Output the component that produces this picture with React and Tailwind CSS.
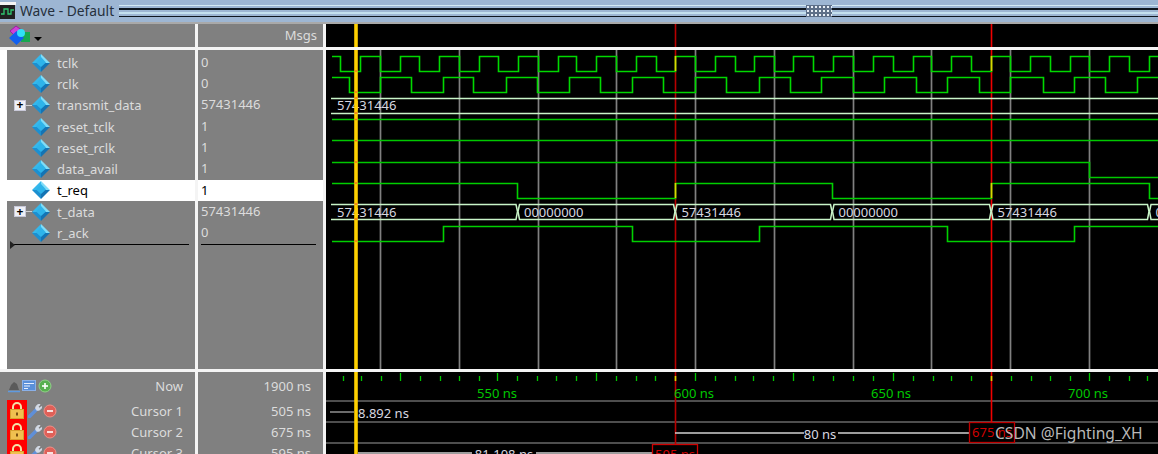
import React from "react";

const signals = [
  { name: "tclk", value: "0" },
  { name: "rclk", value: "0" },
  { name: "transmit_data", value: "57431446", bus: true },
  { name: "reset_tclk", value: "1" },
  { name: "reset_rclk", value: "1" },
  { name: "data_avail", value: "1" },
  { name: "t_req", value: "1", selected: true },
  { name: "t_data", value: "57431446", bus: true },
  { name: "r_ack", value: "0" },
];

const gridLines = [380, 459, 538, 616, 695, 774, 853, 931, 1010, 1089];

const tclkEdges = [340, 360, 380, 400, 419, 439, 459, 479, 498, 518, 538, 558, 576, 596, 616, 636, 656, 675, 695, 715, 735, 754, 774, 793, 813, 833, 853, 873, 893, 913, 931, 951, 971, 991, 1010, 1030, 1050, 1070, 1089, 1109, 1129, 1149];
const rclkEdges = [349, 380, 411, 443, 473, 506, 537, 569, 600, 632, 663, 695, 726, 759, 790, 821, 853, 884, 916, 947, 979, 1010, 1043, 1074, 1105, 1137];
const treqEdges = [517, 675, 832, 991, 1149];
const rackEdges = [443, 632, 759, 947, 1074];

const minorTicks = [343, 361, 381, 420, 440, 459, 479, 517, 537, 556, 576, 616, 636, 655, 715, 735, 753, 773, 813, 833, 853, 873, 913, 933, 951, 971, 1011, 1031, 1050, 1070, 1109, 1129, 1147];
const majorTicks = [400, 497, 596, 695, 793, 893, 1089];

// builds the square wave path from its edges
function squareWave(edges, high, low, startHigh) {
  let level = startHigh;
  let d = `M332 ${level ? high : low}`;
  edges.forEach((x) => {
    d += ` L${x + 0.5} ${level ? high : low}`;
    level = !level;
    d += ` L${x + 0.5} ${level ? high : low}`;
  });
  return `${d} L1160 ${level ? high : low}`;
}

function Diamond() {
  return (
    <svg width="18" height="18" viewBox="0 0 18 18" className="shrink-0">
      <polygon points="9,0 18,9 9,9" fill="#7fdcf8" />
      <polygon points="9,0 0,9 9,9" fill="#35b8ec" />
      <polygon points="0,9 9,18 9,9" fill="#1c8fd0" />
      <polygon points="18,9 9,18 9,9" fill="#1474b4" />
      <polygon points="9,3 14,8.5 9,13 4,8.5" fill="#2eb4ea" />
    </svg>
  );
}

function PlusBox() {
  return (
    <div className="flex items-center">
      <div className="w-[12px] h-[11px] bg-[#eef0f6] border border-[#c8c8d8] flex items-center justify-center text-black text-[12px] leading-none font-bold">
        +
      </div>
      <div className="w-[6px] h-px bg-[#d0d0d0]" />
    </div>
  );
}

function HeaderIcon() {
  return (
    <svg width="22" height="22" viewBox="0 0 22 22">
      <polygon points="7,1 14,6 7,12 1,6" fill="#d040d8" stroke="#9a20a0" strokeWidth="1" />
      <rect x="12" y="7" width="9" height="10" fill="#18a850" />
      <polygon points="7.5,6 15,13 7.5,20 0,13" fill="#1060f0" />
      <circle cx="12" cy="8" r="4" fill="#30e0f8" />
    </svg>
  );
}

function Lock() {
  return (
    <svg width="14" height="17" viewBox="0 0 14 17">
      <path d="M3 8 V5 a4 4 0 0 1 8 0 V8" fill="none" stroke="#f4e2a8" strokeWidth="2" />
      <rect x="0.5" y="7.5" width="13" height="9" fill="#f0c050" stroke="#d8a030" />
      <rect x="6" y="10.5" width="2" height="3" fill="#7a5010" />
    </svg>
  );
}

function Wrench() {
  return (
    <svg width="15" height="15" viewBox="0 0 15 15">
      <path d="M1.5 13.5 L9 6" stroke="#5f8fd8" strokeWidth="3.4" strokeLinecap="round" />
      <path d="M8 6.5 a3.6 3.6 0 0 1 4-5 l-2 2.4 1.2 1.3 2.4-1.6 a3.6 3.6 0 0 1-5 3.4z" fill="#d4dbe6" stroke="#d4dbe6" />
    </svg>
  );
}

function RoundButton({ color, ring, plus }) {
  return (
    <svg width="14" height="14" viewBox="0 0 14 14">
      <circle cx="7" cy="7" r="6" fill={color} stroke={ring} strokeWidth="1" />
      <rect x="4" y="6.2" width="6" height="1.6" fill="#fff" />
      {plus && <rect x="6.2" y="4" width="1.6" height="6" fill="#fff" />}
    </svg>
  );
}

function NowIcons() {
  return (
    <div className="flex items-center pl-[8px] gap-[2px]">
      <svg width="12" height="13" viewBox="0 0 12 13">
        <path d="M1 10 L3 5 L6 2 L9 4 L11 10z" fill="#5a5a5a" />
        <path d="M0 11.5 H12" stroke="#5f9ae0" strokeWidth="1.5" />
      </svg>
      <svg width="14" height="13" viewBox="0 0 14 13">
        <rect x="0.5" y="0.5" width="13" height="10" fill="#5a8fd8" stroke="#8ab0e8" />
        <path d="M2 3.5 H12 M2 6 H8 M2 8.5 H6" stroke="#e8f0ff" />
      </svg>
      <RoundButton color="#58b050" ring="#90d088" plus />
    </div>
  );
}

function Watermark() {
  return (
    <div className="absolute left-[995px] top-[423px] text-[15.6px] leading-5 text-[#b8b8b8] whitespace-nowrap">
      CSDN @Fighting_XH
    </div>
  );
}

function BusSegment({ x1, x2, label, open }) {
  const y = 211.5;
  const top = y - 7;
  const bottom = y + 8;
  const d = open
    ? `M${x1} ${top} H${x2 - 1.5} L${x2} ${y} L${x2 - 1.5} ${bottom} H${x1}`
    : `M${x1} ${y} L${x1 + 1.5} ${top} H${x2 - 1.5} L${x2} ${y} L${x2 - 1.5} ${bottom} H${x1 + 1.5} Z`;
  return (
    <>
      <path d={d} fill="none" stroke="#c8f4c8" strokeWidth="1.5" />
      <text x={x1 + 6} y={y + 5} fontSize="13" fill="#d8d8e0">
        {label}
      </text>
    </>
  );
}

function WaveChart() {
  return (
    <svg width="832" height="319" viewBox="326 50 832 319" className="block">
      {gridLines.map((x) => (
        <line key={x} x1={x + 0.5} x2={x + 0.5} y1="50" y2="369" stroke="#808080" strokeWidth="1.7" />
      ))}

      <line x1="675.5" x2="675.5" y1="50" y2="369" stroke="#b80000" strokeWidth="1.6" />
      <line x1="991.5" x2="991.5" y1="50" y2="369" stroke="#f00000" strokeWidth="1.6" />

      <path d={squareWave(tclkEdges, 56.5, 71.5, true)} fill="none" stroke="#00d800" strokeWidth="1.6" />
      <path d={squareWave(rclkEdges, 77.5, 92.5, true)} fill="none" stroke="#00d800" strokeWidth="1.6" />

      <path d="M331 98.5 H1160 M331 113.5 H1160" stroke="#c8f4c8" strokeWidth="1.5" />
      <text x="337" y="110" fontSize="13" fill="#d8d8e0">57431446</text>

      <path d="M332 119.5 H1160" stroke="#00c800" strokeWidth="1.6" />
      <path d="M332 140.5 H1160" stroke="#00c800" strokeWidth="1.6" />
      <path d="M332 162.5 H1089.5 V177.5 H1160" fill="none" stroke="#00c800" strokeWidth="1.6" />

      <path d={squareWave(treqEdges, 183.5, 198.5, true)} fill="none" stroke="#00d000" strokeWidth="1.6" />

      <BusSegment x1={331} x2={517.5} label="57431446" open />
      <BusSegment x1={518} x2={675} label="00000000" />
      <BusSegment x1={675.5} x2={832} label="57431446" />
      <BusSegment x1={832.5} x2={991} label="00000000" />
      <BusSegment x1={991.5} x2={1149} label="57431446" />
      <BusSegment x1={1149.5} x2={1200} label="00000000" />

      <path d={squareWave(rackEdges, 226.5, 241.5, false)} fill="none" stroke="#00d000" strokeWidth="1.6" />

      {/* edges right under a cursor turn yellow */}
      <path d="M675.5 56 V71 M675.5 183 V198 M991.5 56 V71 M991.5 183 V198" stroke="#d8d800" strokeWidth="1.6" />

      <line x1="356" x2="356" y1="50" y2="369" stroke="#ffd000" strokeWidth="3.6" />
      {[71, 92, 98, 113, 119.5, 140.7, 162, 183, 204, 219, 241].map((y) => (
        <rect key={y} x="354.5" y={y - 0.7} width="3" height="1.4" fill="#f07020" />
      ))}
    </svg>
  );
}

function CursorChart() {
  return (
    <svg width="832" height="82" viewBox="326 372 832 82" className="block">
      <path d="M326 401 H1158 M326 422 H1158 M326 443 H1158" stroke="#686868" strokeWidth="1.3" />

      {minorTicks.map((x) => (
        <line key={x} x1={x + 0.5} x2={x + 0.5} y1="376" y2="381" stroke="#00c800" strokeWidth="1.3" />
      ))}
      {majorTicks.map((x) => (
        <line key={x} x1={x + 0.5} x2={x + 0.5} y1="373" y2="381" stroke="#00c800" strokeWidth="1.3" />
      ))}

      <line x1="675.5" x2="675.5" y1="372" y2="444" stroke="#b80000" strokeWidth="1.6" />
      <line x1="991.5" x2="991.5" y1="372" y2="422" stroke="#f00000" strokeWidth="1.6" />
      <line x1="356" x2="356" y1="372" y2="454" stroke="#ffd000" strokeWidth="3.6" />
      <path d="M675.5 376 V381 M991.5 376 V381" stroke="#d8d800" strokeWidth="1.6" />

      <g fontSize="13" fill="#00c800" textAnchor="middle">
        <text x="497" y="398">550 ns</text>
        <text x="694" y="398">600 ns</text>
        <text x="891" y="398">650 ns</text>
        <text x="1088" y="398">700 ns</text>
      </g>

      <path d="M330 412 H354" stroke="#a8a8a8" strokeWidth="1.3" />
      <text x="358" y="418" fontSize="13" fill="#d8d8e0">8.892 ns</text>

      <path d="M675 433 H804 M838 433 H969" stroke="#d0d0d0" strokeWidth="1.3" />
      <text x="820" y="439" fontSize="13" fill="#d8d8e0" textAnchor="middle">80 ns</text>
      <rect x="969.5" y="422.5" width="45" height="20" fill="#000" stroke="#c00000" strokeWidth="1.3" />
      <text x="992" y="437" fontSize="13" fill="#d00000" textAnchor="middle">675 ns</text>

      <path d="M358 453 H472 M536 453 H652" stroke="#d0d0d0" strokeWidth="1.3" />
      <text x="504" y="459" fontSize="13" fill="#d8d8e0" textAnchor="middle">81.108 ns</text>
      <rect x="652.5" y="444.5" width="45" height="20" fill="#000" stroke="#d00000" strokeWidth="1.3" />
      <text x="675" y="459" fontSize="13" fill="#d00000" textAnchor="middle">595 ns</text>
    </svg>
  );
}

function Stripes({ className }) {
  return (
    <div className={`flex flex-col gap-[2px] ${className}`}>
      <div className="h-[1px] bg-[#d4eaf4]" />
      <div className="h-[1.5px] bg-[#101820]" />
      <div className="h-[2px] bg-[#c4e0ee]" />
      <div className="h-[1.5px] bg-[#101820]" />
    </div>
  );
}

function TitleBar() {
  return (
    <div className="h-[24px] flex items-center bg-[#9db6d3] border-b-2 border-[#a9a9a9] text-[#26303c]">
      <svg width="16" height="22" viewBox="0 0 16 22" className="shrink-0">
        <rect x="0" y="2" width="16" height="3" fill="#f4f4f4" />
        <rect x="0" y="5" width="15" height="14" fill="#202020" />
        <path d="M1 14 H4 V9 H8 V14 H11 V10 H14" fill="none" stroke="#30c870" strokeWidth="1.3" />
      </svg>
      <span className="ml-[4px] w-[99px] text-[13.8px] leading-5 whitespace-nowrap">Wave - Default</span>
      <Stripes className="w-[687px]" />
      <div className="w-[26px] h-[12px] bg-[#9db6d3] bg-[radial-gradient(#e8f0f8_1px,#5d6f88_1px)] bg-[length:4px_4px]" />
      <Stripes className="flex-1" />
    </div>
  );
}

export default function App() {
  return (
    <div className="relative w-[1158px] h-[454px] overflow-hidden bg-black font-['Noto_Sans',sans-serif] text-[13px] text-[#dcdcdc]">
      <TitleBar />

      {/* header row */}
      <div className="flex h-[26px] border-b-[3px] border-[#f4f4f4]">
        <div className="w-[198px] bg-[#808080] border-r-[3px] border-[#f4f4f4] flex items-center pl-[9px]">
          <HeaderIcon />
          <div className="ml-[3px] mt-[7px] w-0 h-0 border-x-[4px] border-x-transparent border-t-[4px] border-t-black" />
        </div>
        <div className="w-[128px] bg-[#808080] border-r-[3px] border-[#f4f4f4] flex items-center justify-end pr-[6px]">
          Msgs
        </div>
        <svg width="832" height="23" viewBox="326 24 832 23" className="block">
          <line x1="356" x2="356" y1="24" y2="47" stroke="#ffd000" strokeWidth="3.6" />
          <line x1="675.5" x2="675.5" y1="24" y2="47" stroke="#b80000" strokeWidth="1.6" />
          <line x1="991.5" x2="991.5" y1="24" y2="47" stroke="#f00000" strokeWidth="1.6" />
        </svg>
      </div>

      {/* signal rows */}
      <div className="flex h-[322px] border-b-[3px] border-[#f4f4f4]">
        <div className="w-[198px] bg-[#808080] border-r-[3px] border-[#f4f4f4] border-l-[7px] border-l-white pt-[2px]">
          {signals.map((s) => (
            <div
              key={s.name}
              className={`h-[21.3px] flex items-center ${s.selected ? "bg-white text-black" : ""}`}
            >
              <div className="w-[25px] pl-[7px] shrink-0">{s.bus && <PlusBox />}</div>
              <Diamond />
              <span className="ml-[7px] leading-4">{s.name}</span>
            </div>
          ))}
          <div className="relative h-[1.5px] bg-black ml-[5px] mr-[6px]">
            <div className="absolute left-[-2px] top-[-3px] w-0 h-0 border-y-[4px] border-y-transparent border-l-[5px] border-l-[#222]" />
          </div>
        </div>
        <div className="w-[128px] bg-[#808080] border-r-[3px] border-[#f4f4f4] pt-[2px]">
          {signals.map((s) => (
            <div
              key={s.name}
              className={`h-[21.3px] flex items-center pl-[3px] ${s.selected ? "bg-white text-black" : ""}`}
            >
              {s.value}
            </div>
          ))}
          <div className="h-[1.5px] bg-black ml-[3px] mr-[7px]" />
        </div>
        <WaveChart />
      </div>

      {/* cursor rows */}
      <div className="flex h-[82px]">
        <div className="w-[198px] bg-[#808080] border-r-[3px] border-[#f4f4f4]">
          <div className="h-[28px] flex items-center justify-between pr-[12px]">
            <NowIcons />
            <span className="pt-[2px]">Now</span>
          </div>
          {["Cursor 1", "Cursor 2", "Cursor 3"].map((c) => (
            <div key={c} className="h-[21px] flex items-center pr-[12px]">
              <div className="ml-[7px] w-[20px] h-full bg-[#ff0000] flex items-center justify-center">
                <Lock />
              </div>
              <div className="ml-[1px] flex items-center">
                <Wrench />
                <RoundButton color="#e06058" ring="#f09088" />
              </div>
              <span className="ml-auto pt-[2px]">{c}</span>
            </div>
          ))}
        </div>
        <div className="w-[128px] bg-[#808080] border-r-[3px] border-[#f4f4f4] pr-[12px] text-right">
          <div className="h-[28px] flex items-center justify-end pt-[2px]">1900 ns</div>
          {["505 ns", "675 ns", "595 ns"].map((t) => (
            <div key={t} className="h-[21px] flex items-center justify-end pt-[2px]">{t}</div>
          ))}
        </div>
        <CursorChart />
      </div>

      <Watermark />
    </div>
  );
}
